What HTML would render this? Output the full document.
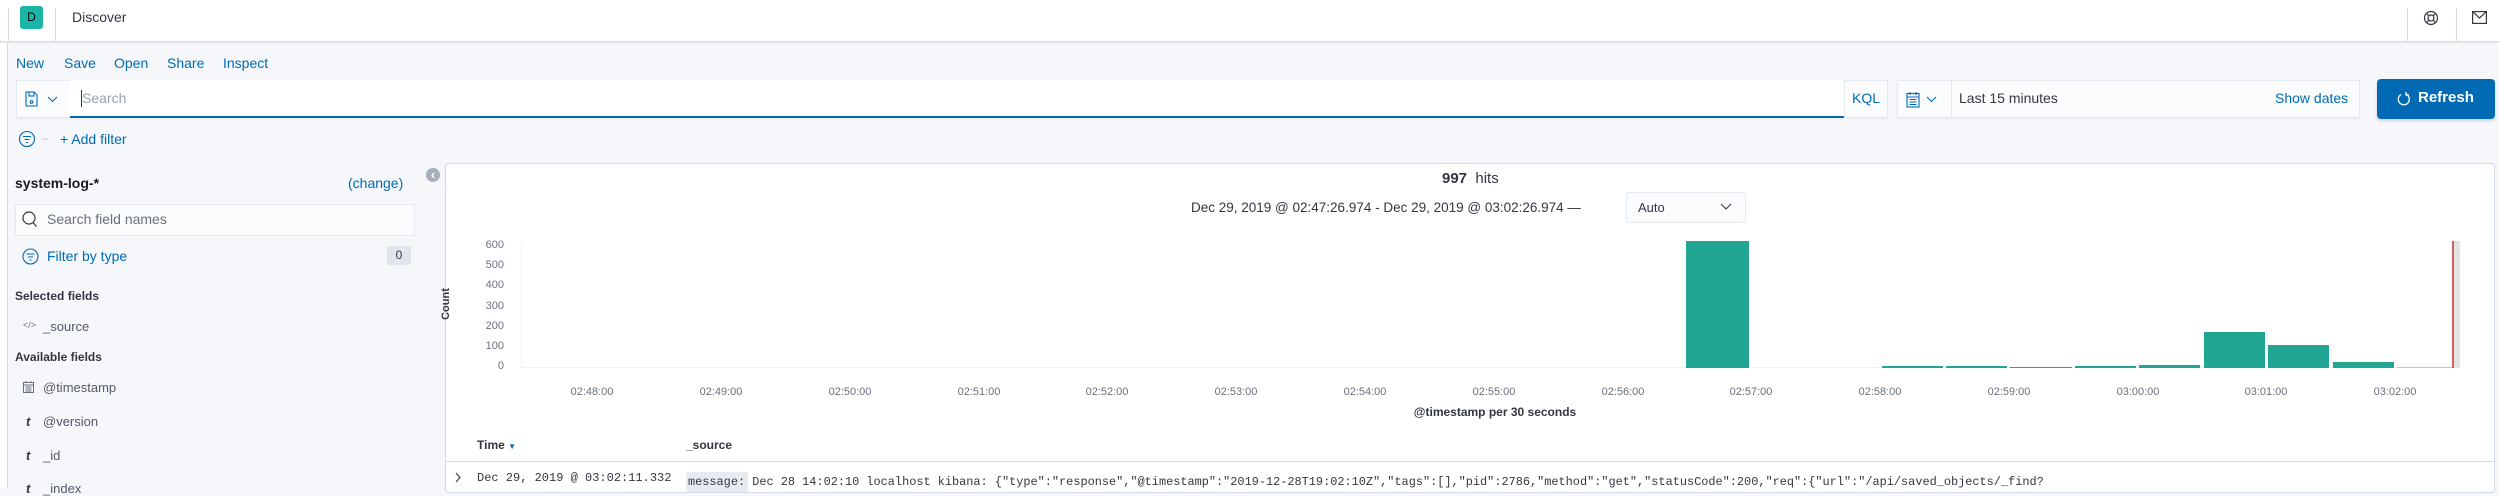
<!DOCTYPE html>
<html><head><meta charset="utf-8"><style>
*{box-sizing:border-box;margin:0;padding:0}
body{width:2499px;height:488px;overflow:hidden;background:#f5f7fa;font-family:"Liberation Sans",sans-serif;color:#343741;position:relative}
.a{position:absolute;white-space:nowrap}
.blue{color:#006bb4}
.mono{font-family:"Liberation Mono",monospace}
.lbl{font-size:11px;color:#69707d}
</style></head><body>
<!-- header -->
<div class="a" style="left:0;top:0;width:2499px;height:42px;background:#fff;border-bottom:1px solid #d3dae6;box-shadow:0 1px 2px rgba(0,0,0,.08)"></div>
<div class="a" style="left:8px;top:8px;width:1px;height:34px;background:#d3dae6"></div>
<div class="a" style="left:20px;top:6px;width:23px;height:23px;background:#1bb5a8;border-radius:3px;font-size:12px;color:#000;text-align:center;line-height:23px">D</div>
<div class="a" style="left:55px;top:8px;width:1px;height:34px;background:#d3dae6"></div>
<div class="a" style="left:72px;top:9px;font-size:14px;color:#343741">Discover</div>
<div class="a" style="left:2407px;top:8px;width:1px;height:34px;background:#d3dae6"></div>
<div class="a" style="left:2456px;top:8px;width:1px;height:34px;background:#d3dae6"></div>
<svg class="a" style="left:2423px;top:10px" width="16" height="16" viewBox="0 0 16 16" fill="none" stroke="#343741" stroke-width="1.2"><circle cx="8" cy="8" r="6.5"/><circle cx="8" cy="8" r="3"/><path d="M3.5 3.5l2.4 2.4M12.5 3.5l-2.4 2.4M3.5 12.5l2.4-2.4M12.5 12.5l-2.4-2.4"/></svg>
<svg class="a" style="left:2472px;top:11px" width="15" height="13" viewBox="0 0 15 13" fill="none" stroke="#343741" stroke-width="1.2"><rect x="0.6" y="0.6" width="13.8" height="11.8"/><path d="M0.6 0.6l6.9 6.5 6.9-6.5"/></svg>
<!-- left strip -->
<div class="a" style="left:0;top:43px;width:8px;height:445px;background:#fff;border-right:1px solid #d3dae6"></div>
<!-- nav -->
<div class="a blue" style="left:16px;top:55px;font-size:14px">New</div>
<div class="a blue" style="left:64px;top:55px;font-size:14px">Save</div>
<div class="a blue" style="left:114px;top:55px;font-size:14px">Open</div>
<div class="a blue" style="left:167px;top:55px;font-size:14px">Share</div>
<div class="a blue" style="left:223px;top:55px;font-size:14px">Inspect</div>
<!-- query bar -->
<div class="a" style="left:16px;top:80px;width:1872px;height:38px;background:#fbfcfd;border:1px solid #e4e8ef;box-shadow:0 1px 2px rgba(0,0,0,.05)"></div>
<svg class="a" style="left:25px;top:91px" width="36" height="16" viewBox="0 0 36 16" fill="none" stroke="#006bb4" stroke-width="1.1"><path d="M1 1h8l3 3v11H1z"/><rect x="4" y="1" width="5" height="4"/><circle cx="6.5" cy="11" r="1.3"/><path d="M23 6l4.5 4.5L32 6"/></svg>
<div class="a" style="left:70px;top:80px;width:1774px;height:38px;background:#fff;border-bottom:2px solid #006bb4"></div>
<div class="a" style="left:81px;top:90px;width:1px;height:17px;background:#343741"></div>
<div class="a" style="left:82px;top:90px;font-size:14px;color:#98a2b3">Search</div>
<div class="a" style="left:1844px;top:80px;width:1px;height:38px;background:#e4e8ef"></div>
<div class="a blue" style="left:1852px;top:90px;font-size:14px">KQL</div>
<div class="a" style="left:1897px;top:80px;width:463px;height:38px;background:#fbfcfd;border:1px solid #e4e8ef;box-shadow:0 1px 2px rgba(0,0,0,.05)"></div>
<svg class="a" style="left:1906px;top:91px" width="36" height="17" viewBox="0 0 36 17" fill="none" stroke="#006bb4" stroke-width="1.1"><rect x="1" y="2.5" width="12" height="13.5"/><path d="M1 6h12M4 1v3M10 1v3M3.5 8.5h7M3.5 11h7M3.5 13.5h7"/><path d="M21 6l4.5 4.5L30 6"/></svg>
<div class="a" style="left:1951px;top:80px;width:1px;height:38px;background:#e4e8ef"></div>
<div class="a" style="left:1959px;top:90px;font-size:14px;color:#343741">Last 15 minutes</div>
<div class="a blue" style="left:2275px;top:90px;font-size:14px">Show dates</div>
<div class="a" style="left:2377px;top:79px;width:118px;height:40px;background:#006bb4;border-radius:4px;box-shadow:0 2px 3px rgba(0,0,0,.15)"></div>
<svg class="a" style="left:2397px;top:91px" width="14" height="16" viewBox="0 0 14 16" fill="none" stroke="#fff" stroke-width="1.3"><path d="M9 3.2A5.5 5.5 0 1 1 4 3.5"/><path d="M9 1v3h3"/></svg>
<div class="a" style="left:2418px;top:89px;font-size:15px;color:#fff;font-weight:bold">Refresh</div>
<!-- filter row -->
<svg class="a" style="left:18px;top:130px" width="40" height="18" viewBox="0 0 40 18" fill="none" stroke="#006bb4" stroke-width="1.1"><circle cx="9" cy="9" r="7.5"/><path d="M5 6.5h8M6.5 9.5h5M8 12.5h2"/><path d="M24 9h6" stroke="#c5ccd6"/></svg>
<div class="a blue" style="left:60px;top:131px;font-size:14px">+ Add filter</div>
<!-- sidebar -->
<div class="a" style="left:15px;top:175px;font-size:14px;font-weight:bold;color:#1a1c21">system-log-*</div>
<div class="a blue" style="left:348px;top:175px;font-size:14px">(change)</div>
<div class="a" style="left:426px;top:168px;width:14px;height:14px;border-radius:50%;background:#a7afbb;color:#fff;font-size:13px;line-height:13px;text-align:center;font-weight:bold">‹</div>
<div class="a" style="left:15px;top:204px;width:400px;height:32px;background:#fbfcfd;border:1px solid #e4e8ef"></div>
<svg class="a" style="left:22px;top:211px" width="16" height="17" viewBox="0 0 16 17" fill="none" stroke="#343741" stroke-width="1.2"><circle cx="7" cy="7" r="6"/><path d="M11 11.5l3.5 4"/></svg>
<div class="a" style="left:47px;top:211px;font-size:14px;color:#69707d">Search field names</div>
<svg class="a" style="left:22px;top:248px" width="17" height="17" viewBox="0 0 17 17" fill="none" stroke="#006bb4" stroke-width="1.1"><circle cx="8.5" cy="8.5" r="7.5"/><path d="M4.5 6h8M6 9h5M7.5 12h2"/></svg>
<div class="a blue" style="left:47px;top:248px;font-size:14px">Filter by type</div>
<div class="a" style="left:387px;top:246px;width:24px;height:19px;background:#e0e5ee;border-radius:2px;font-size:12px;text-align:center;line-height:19px;color:#343741">0</div>
<div class="a" style="left:15px;top:289px;font-size:12px;font-weight:bold;color:#343741">Selected fields</div>
<div class="a" style="left:23px;top:320px;font-size:9px;color:#69707d">&lt;/&gt;</div>
<div class="a" style="left:43px;top:319px;font-size:13px;color:#535966">_source</div>
<div class="a" style="left:15px;top:350px;font-size:12px;font-weight:bold;color:#343741">Available fields</div>
<svg class="a" style="left:23px;top:381px" width="11" height="12" viewBox="0 0 11 12" fill="none" stroke="#69707d" stroke-width="1"><rect x="0.5" y="1.5" width="10" height="10"/><path d="M0.5 4h10M3 0v2M8 0v2M2.5 6h6M2.5 8h6M2.5 10h6"/></svg>
<div class="a" style="left:43px;top:380px;font-size:13px;color:#535966">@timestamp</div>
<div class="a" style="left:26px;top:414px;font-size:13px;font-weight:bold;font-style:italic;color:#343741">t</div>
<div class="a" style="left:43px;top:414px;font-size:13px;color:#535966">@version</div>
<div class="a" style="left:26px;top:448px;font-size:13px;font-weight:bold;font-style:italic;color:#343741">t</div>
<div class="a" style="left:43px;top:448px;font-size:13px;color:#535966">_id</div>
<div class="a" style="left:26px;top:481px;font-size:13px;font-weight:bold;font-style:italic;color:#343741">t</div>
<div class="a" style="left:43px;top:481px;font-size:13px;color:#535966">_index</div>
<!-- main panel -->
<div class="a" style="left:445px;top:163px;width:2050px;height:330px;background:#fff;border:1px solid #d3dae6;border-radius:4px"></div>
<div class="a" style="left:1442px;top:170px;font-size:15px;color:#343741"><b>997</b>&nbsp; hits</div>
<div class="a" style="left:1191px;top:200px;font-size:13.5px;color:#343741">Dec 29, 2019 @ 02:47:26.974 - Dec 29, 2019 @ 03:02:26.974 —</div>
<div class="a" style="left:1626px;top:192px;width:120px;height:31px;background:#fbfcfd;border:1px solid #e4e8ef;border-radius:3px"></div>
<div class="a" style="left:1638px;top:200px;font-size:13px;color:#343741">Auto</div>
<svg class="a" style="left:1720px;top:203px" width="12" height="8" viewBox="0 0 12 8" fill="none" stroke="#343741" stroke-width="1.1"><path d="M1 1l5 5 5-5"/></svg>
<!-- chart -->
<div class="a" style="left:430px;top:298px;transform:rotate(-90deg);font-size:11px;font-weight:bold;color:#343741">Count</div>
<div class="a lbl" style="left:480px;top:239px;width:24px;text-align:right">600</div>
<div class="a lbl" style="left:480px;top:259px;width:24px;text-align:right">500</div>
<div class="a lbl" style="left:480px;top:279px;width:24px;text-align:right">400</div>
<div class="a lbl" style="left:480px;top:300px;width:24px;text-align:right">300</div>
<div class="a lbl" style="left:480px;top:320px;width:24px;text-align:right">200</div>
<div class="a lbl" style="left:480px;top:340px;width:24px;text-align:right">100</div>
<div class="a lbl" style="left:480px;top:360px;width:24px;text-align:right">0</div>
<div class="a" style="left:521px;top:241px;width:1px;height:127px;background:#eef0f3"></div>
<div class="a" style="left:521px;top:367px;width:1939px;height:1px;background:#eef0f3"></div>
<div class="a" style="left:1686px;top:241px;width:63px;height:127px;background:#20a693"></div>
<div class="a" style="left:1882px;top:366px;width:61px;height:2px;background:#20a693"></div>
<div class="a" style="left:1946px;top:366px;width:61px;height:2px;background:#20a693"></div>
<div class="a" style="left:2010px;top:367px;width:62px;height:1px;background:#20a693"></div>
<div class="a" style="left:2075px;top:366px;width:61px;height:2px;background:#20a693"></div>
<div class="a" style="left:2139px;top:365px;width:61px;height:3px;background:#20a693"></div>
<div class="a" style="left:2204px;top:332px;width:61px;height:36px;background:#20a693"></div>
<div class="a" style="left:2268px;top:345px;width:61px;height:23px;background:#20a693"></div>
<div class="a" style="left:2333px;top:362px;width:61px;height:6px;background:#20a693"></div>
<div class="a" style="left:2397px;top:367px;width:56px;height:1px;background:#9fd8cf"></div>
<div class="a" style="left:2454px;top:241px;width:6px;height:127px;background:#e3e3e3"></div>
<div class="a" style="left:2452px;top:241px;width:2px;height:127px;background:#d36060"></div>
<div class="a lbl" style="left:562px;top:386px;width:60px;text-align:center">02:48:00</div>
<div class="a lbl" style="left:691px;top:386px;width:60px;text-align:center">02:49:00</div>
<div class="a lbl" style="left:820px;top:386px;width:60px;text-align:center">02:50:00</div>
<div class="a lbl" style="left:949px;top:386px;width:60px;text-align:center">02:51:00</div>
<div class="a lbl" style="left:1077px;top:386px;width:60px;text-align:center">02:52:00</div>
<div class="a lbl" style="left:1206px;top:386px;width:60px;text-align:center">02:53:00</div>
<div class="a lbl" style="left:1335px;top:386px;width:60px;text-align:center">02:54:00</div>
<div class="a lbl" style="left:1464px;top:386px;width:60px;text-align:center">02:55:00</div>
<div class="a lbl" style="left:1593px;top:386px;width:60px;text-align:center">02:56:00</div>
<div class="a lbl" style="left:1721px;top:386px;width:60px;text-align:center">02:57:00</div>
<div class="a lbl" style="left:1850px;top:386px;width:60px;text-align:center">02:58:00</div>
<div class="a lbl" style="left:1979px;top:386px;width:60px;text-align:center">02:59:00</div>
<div class="a lbl" style="left:2108px;top:386px;width:60px;text-align:center">03:00:00</div>
<div class="a lbl" style="left:2236px;top:386px;width:60px;text-align:center">03:01:00</div>
<div class="a lbl" style="left:2365px;top:386px;width:60px;text-align:center">03:02:00</div>
<div class="a" style="left:1395px;top:405px;width:200px;text-align:center;font-size:12px;font-weight:bold;color:#343741">@timestamp per 30 seconds</div>
<!-- table -->
<div class="a" style="left:477px;top:438px;font-size:12px;font-weight:bold;color:#343741">Time <span style="color:#006bb4;font-size:8px">▼</span></div>
<div class="a" style="left:686px;top:438px;font-size:12px;font-weight:bold;color:#343741">_source</div>
<div class="a" style="left:446px;top:461px;width:2048px;height:1px;background:#d3dae6"></div>
<svg class="a" style="left:454px;top:472px" width="8" height="11" viewBox="0 0 8 11" fill="none" stroke="#343741" stroke-width="1.1"><path d="M2 1l4 4.5L2 10"/></svg>
<div class="a mono" style="left:477px;top:471px;font-size:12px;color:#343741">Dec 29, 2019 @ 03:02:11.332</div>
<div class="a" style="left:686px;top:472px;width:62px;height:20px;background:#e6ebf2;border-radius:3px"></div>
<div class="a mono" style="left:688px;top:475px;font-size:11.9px;color:#343741">message: Dec 28 14:02:10 localhost kibana: {"type":"response","@timestamp":"2019-12-28T19:02:10Z","tags":[],"pid":2786,"method":"get","statusCode":200,"req":{"url":"/api/saved_objects/_find?</div>
</body></html>
